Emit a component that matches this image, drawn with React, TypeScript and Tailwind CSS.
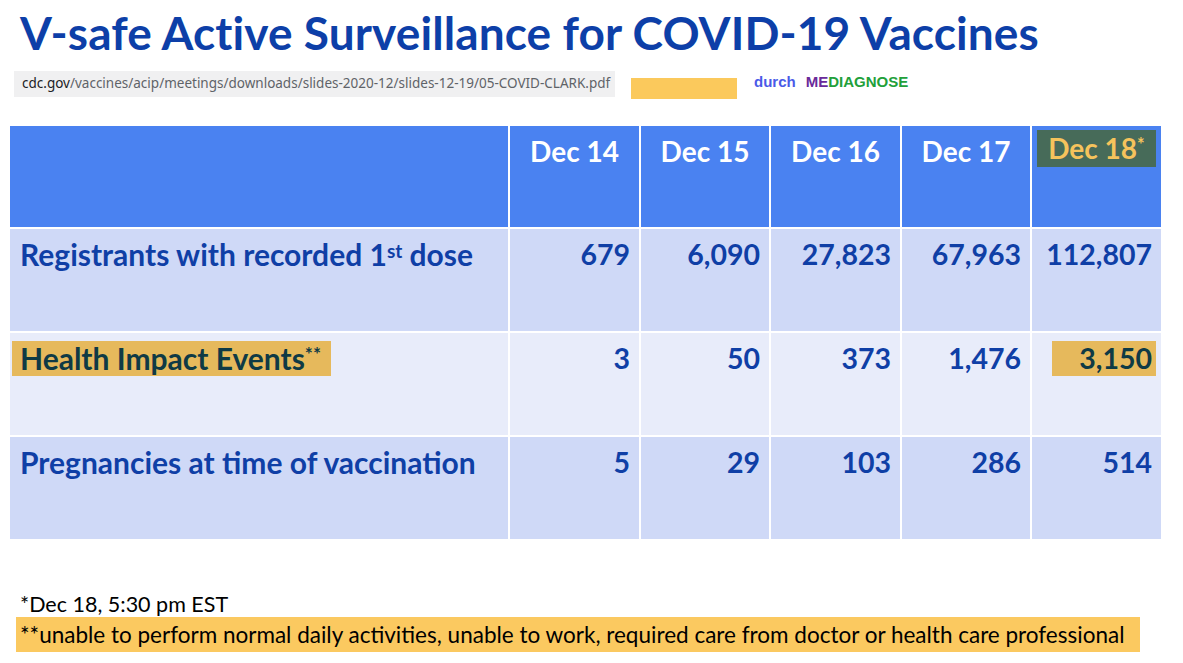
import React from "react";

const cols = ["Dec 14", "Dec 15", "Dec 16", "Dec 17"];

const rows = [
  { label: "reg", values: ["679", "6,090", "27,823", "67,963", "112,807"], bg: "bg-[#cfd9f7]" },
  { label: "hie", values: ["3", "50", "373", "1,476", "3,150"], bg: "bg-[#e8ecfa]" },
  { label: "preg", values: ["5", "29", "103", "286", "514"], bg: "bg-[#cfd9f7]" },
];

function Label({ id }: { id: string }) {
  if (id === "reg")
    return (
      <span className="text-[#0f3fa6]">
        Registrants with recorded 1<sup className="text-[19px] relative -top-[8px]">st</sup> dose
      </span>
    );
  if (id === "hie")
    return (
      <span className="inline-block bg-[#e6b95c] text-[#0f3a45] pl-[8px] pr-[10px] -ml-[8px] leading-[35px]">
        Health Impact Events<sup className="text-[19px] relative -top-[9px]">**</sup>
      </span>
    );
  return <span className="text-[#0f3fa6]">Pregnancies at time of vaccination</span>;
}

export default function App() {
  return (
    <div className="w-[1183px] h-[663px] bg-white relative overflow-hidden font-['Lato',sans-serif]">
      <div className="pl-[20px] pt-[6px]">
        <h1 className="text-[46px] font-bold text-[#0d3fa8] leading-[54px] tracking-[0.1px] whitespace-nowrap">
          V-safe Active Surveillance for COVID-19 Vaccines
        </h1>
      </div>
      <div className="flex items-center mt-[8px] pl-[14px]">
        <div className="h-[26px] w-[601px] bg-[#f0f0f1] flex items-center pl-[8px] text-[13.5px] font-['Noto_Sans',sans-serif] text-[#5f6368] whitespace-nowrap">
          <span className="text-[#202124]">cdc.gov</span>/vaccines/acip/meetings/downloads/slides-2020-12/slides-12-19/05-COVID-CLARK.pdf
        </div>
        <div className="ml-[16px] mt-[10px] h-[21px] w-[106px] bg-[#fbc95c]" />
        <div className="ml-[17px] mt-[-3px] font-['Liberation_Sans',sans-serif] font-bold text-[15px] whitespace-nowrap">
          <span className="text-[#4a5ae8]">durch</span>
          <span className="ml-[10px] text-[#6a2a9a]">ME</span>
          <span className="text-[#22a03a]">DIAGNOSE</span>
        </div>
      </div>

      <div className="ml-[10px] mt-[27px] w-[1151px] grid grid-cols-[498px_129px_128px_129px_128px_129px] gap-x-[2px] gap-y-[2px] bg-white">
        <div className="h-[101px] bg-[#4a82f1]" />
        {cols.map((c) => (
          <div key={c} className="h-[101px] bg-[#4a82f1] text-white text-[28px] font-bold text-center pt-[6px] leading-[38px]">
            {c}
          </div>
        ))}
        <div className="h-[101px] bg-[#4a82f1] pt-[4px] px-[5px]">
          <div className="bg-[#476b59] text-[#f6c35c] text-[28px] font-bold text-center leading-[37px] h-[37px] whitespace-nowrap">
            Dec 18<sup className="text-[18px] relative -top-[8px]">*</sup>
          </div>
        </div>
        {rows.map((r) => (
          <React.Fragment key={r.label}>
            <div className={`h-[102px] ${r.bg} pl-[10px] pt-[8px] text-[30px] font-bold leading-[35px] whitespace-nowrap`}>
              <Label id={r.label} />
            </div>
            {r.values.map((v, i) =>
              r.label === "hie" && i === 4 ? (
                <div key={i} className={`h-[102px] ${r.bg} pt-[8px] pr-[5px] pl-[20px]`}>
                  <div className="bg-[#e6b95c] text-[#0f3a45] text-[28.5px] font-bold text-right pr-[4px] leading-[35px]">
                    {v}
                  </div>
                </div>
              ) : (
                <div key={i} className={`h-[102px] ${r.bg} pt-[8px] pr-[9px] text-right text-[28.5px] font-bold text-[#0f3fa6] leading-[35px]`}>
                  {v}
                </div>
              )
            )}
          </React.Fragment>
        ))}
      </div>

      <div className="absolute left-0 top-[592px] w-full">
        <div className="pl-[20px] text-[21.5px] text-black leading-[25px]">*Dec 18, 5:30 pm EST</div>
        <div className="ml-[16px] w-[1124px] h-[35px] bg-[#fbc960] pl-[4px] text-[22.5px] text-black leading-[35px] whitespace-nowrap">
          **unable to perform normal daily activities, unable to work, required care from doctor or health care professional
        </div>
      </div>
    </div>
  );
}
